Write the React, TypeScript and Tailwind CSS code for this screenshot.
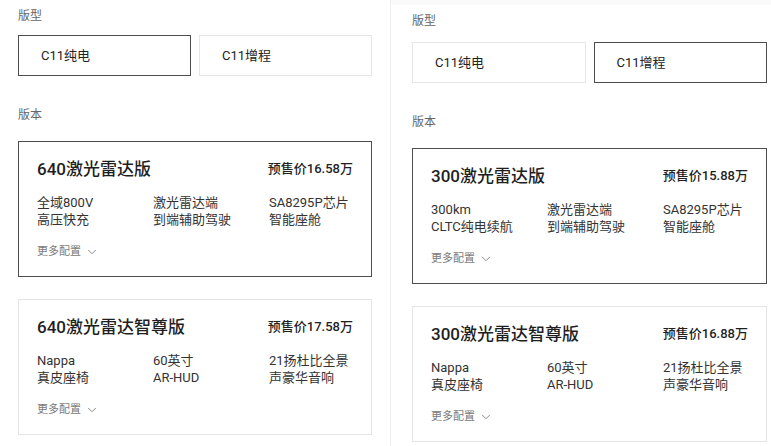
import React from "react";
import { ChevronDown } from "lucide-react";

type Version = {
  name: string;
  price: string;
  features: [string, string][];
  selected?: boolean;
};

const font = { fontFamily: "Roboto, 'Noto Sans CJK SC', sans-serif" };

const VersionCard = ({ v }: { v: Version }) => (
  <div
    className={`w-full bg-white px-[18px] pt-[15px] pb-[16px] ${
      v.selected ? "border-[1.5px] border-[#4d4d4d]" : "border border-[#e4e4e4]"
    }`}
  >
    <div className="flex items-center justify-between">
      <span className="text-[17px] leading-[24px] font-medium text-[#1f1f1f]">{v.name}</span>
      <span className="text-[13px] leading-[24px] font-medium text-[#1f1f1f]">{v.price}</span>
    </div>
    <div className="mt-[13px] grid grid-cols-[116px_116px_1fr]">
      {v.features.map(([a, b]) => (
        <div key={a} className="flex flex-col text-[13px] leading-[17px] text-[#333]">
          <span>{a}</span>
          <span>{b}</span>
        </div>
      ))}
    </div>
    <div className="mt-4 flex items-center gap-[4px] text-[11px] leading-[16px] text-[#7a7a7a]">
      <span>更多配置</span>
      <ChevronDown size={14} strokeWidth={1.5} />
    </div>
  </div>
);

const TypeButton = ({ label, selected }: { label: string; selected?: boolean }) => (
  <div
    className={`flex h-[41px] flex-1 items-center pl-[22px] text-[13px] text-[#222] ${
      selected ? "border-[1.5px] border-[#4d4d4d]" : "border border-[#e6e6e6]"
    }`}
  >
    {label}
  </div>
);

const Panel = ({
  selectedType,
  versions,
  className,
}: {
  selectedType: number;
  versions: Version[];
  className: string;
}) => (
  <div className={className}>
    <div className="text-[12px] leading-[18px] text-[#666]">版型</div>
    <div className="mt-[var(--gap1)] flex gap-2">
      <TypeButton label="C11纯电" selected={selectedType === 0} />
      <TypeButton label="C11增程" selected={selectedType === 1} />
    </div>
    <div className="mt-[30px] text-[12px] leading-[18px] text-[#666]">版本</div>
    <div className="mt-[17px] flex flex-col gap-[22px]">
      {versions.map((v) => (
        <VersionCard key={v.name} v={v} />
      ))}
    </div>
  </div>
);

const left: Version[] = [
  {
    name: "640激光雷达版",
    price: "预售价16.58万",
    selected: true,
    features: [
      ["全域800V", "高压快充"],
      ["激光雷达端", "到端辅助驾驶"],
      ["SA8295P芯片", "智能座舱"],
    ],
  },
  {
    name: "640激光雷达智尊版",
    price: "预售价17.58万",
    features: [
      ["Nappa", "真皮座椅"],
      ["60英寸", "AR-HUD"],
      ["21扬杜比全景", "声豪华音响"],
    ],
  },
];

const right: Version[] = [
  {
    name: "300激光雷达版",
    price: "预售价15.88万",
    selected: true,
    features: [
      ["300km", "CLTC纯电续航"],
      ["激光雷达端", "到端辅助驾驶"],
      ["SA8295P芯片", "智能座舱"],
    ],
  },
  {
    name: "300激光雷达智尊版",
    price: "预售价16.88万",
    features: [
      ["Nappa", "真皮座椅"],
      ["60英寸", "AR-HUD"],
      ["21扬杜比全景", "声豪华音响"],
    ],
  },
];

export default function App() {
  return (
    <div className="flex h-[446px] w-[771px] overflow-hidden bg-white" style={font}>
      <Panel
        selectedType={0}
        versions={left}
        className="w-[390px] shrink-0 px-[18px] pt-[7px] [--gap1:10px]"
      />
      <div className="flex-1 border-l border-[#f0f0f0]">
        <div className="h-[5px] bg-[#fafafa]" />
        <Panel
          selectedType={1}
          versions={right}
          className="pl-[21px] pr-[4px] pt-[7px] [--gap1:12px]"
        />
      </div>
    </div>
  );
}
